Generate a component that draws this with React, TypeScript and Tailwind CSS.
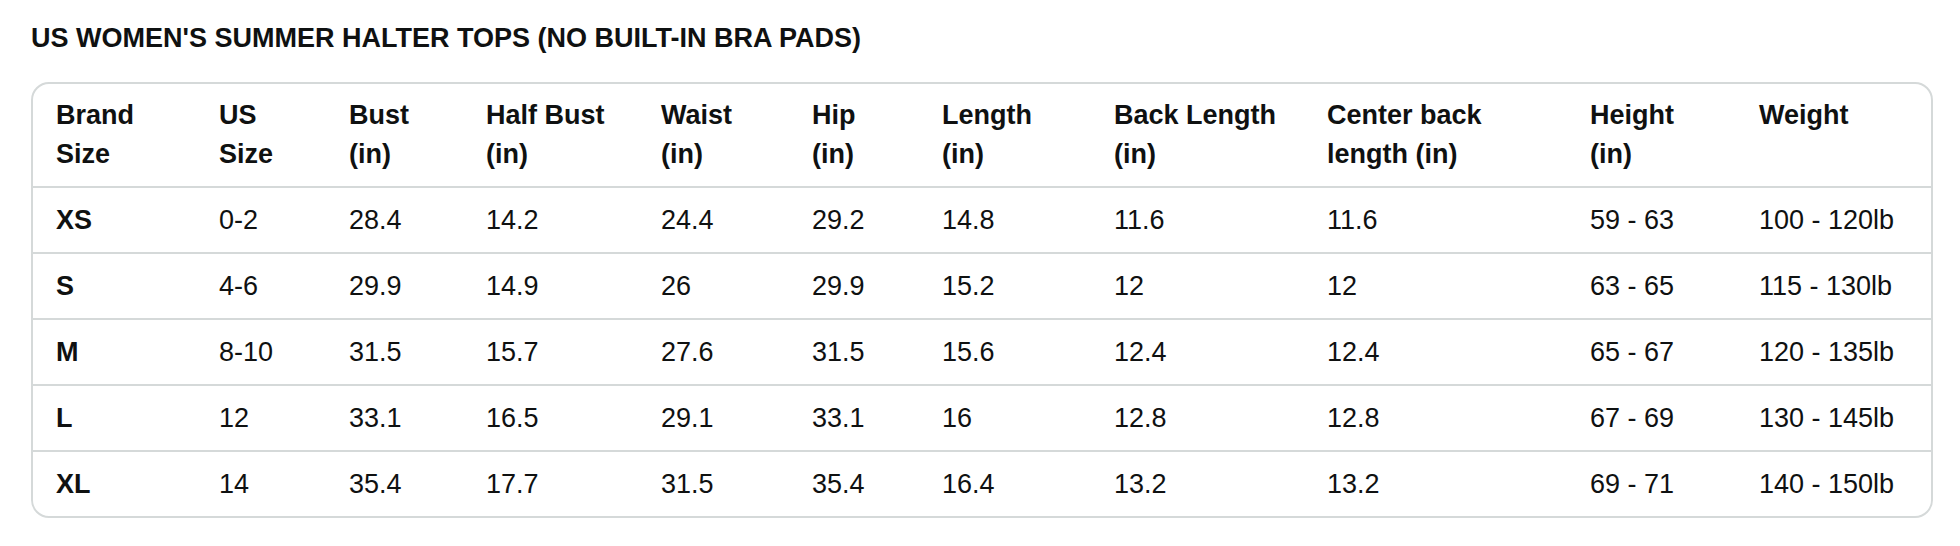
const columns = [
  { label: ["Brand", "Size"], width: "w-[163px]" },
  { label: ["US", "Size"], width: "w-[130px]" },
  { label: ["Bust", "(in)"], width: "w-[137px]" },
  { label: ["Half Bust", "(in)"], width: "w-[175px]" },
  { label: ["Waist", "(in)"], width: "w-[151px]" },
  { label: ["Hip", "(in)"], width: "w-[130px]" },
  { label: ["Length", "(in)"], width: "w-[172px]" },
  { label: ["Back Length", "(in)"], width: "w-[213px]" },
  { label: ["Center back", "length (in)"], width: "w-[263px]" },
  { label: ["Height", "(in)"], width: "w-[169px]" },
  { label: ["Weight"], width: "w-[195px]" },
];

const rows = [
  ["XS", "0-2", "28.4", "14.2", "24.4", "29.2", "14.8", "11.6", "11.6", "59 - 63", "100 - 120lb"],
  ["S", "4-6", "29.9", "14.9", "26", "29.9", "15.2", "12", "12", "63 - 65", "115 - 130lb"],
  ["M", "8-10", "31.5", "15.7", "27.6", "31.5", "15.6", "12.4", "12.4", "65 - 67", "120 - 135lb"],
  ["L", "12", "33.1", "16.5", "29.1", "33.1", "16", "12.8", "12.8", "67 - 69", "130 - 145lb"],
  ["XL", "14", "35.4", "17.7", "31.5", "35.4", "16.4", "13.2", "13.2", "69 - 71", "140 - 150lb"],
];

export default function App() {
  return (
    <div className="min-h-[546px] w-[1960px] bg-white font-['Liberation_Sans',Arial,sans-serif] text-[#0f1111]">
      <div className="pl-[31px] pt-[20px]">
        <h2 className="text-[27px] font-bold leading-[36px]">
          US WOMEN'S SUMMER HALTER TOPS (NO BUILT-IN BRA PADS)
        </h2>

        <div className="mt-[26px] w-[1902px] overflow-hidden rounded-[18px] border-2 border-[#d5d9d9]">
          <table className="w-full table-fixed border-collapse text-[27px] leading-[39px]">
            <colgroup>
              {columns.map((col) => (
                <col key={col.label.join(" ")} className={col.width} />
              ))}
            </colgroup>
            <thead>
              <tr className="border-b-2 border-[#d5d9d9]">
                {columns.map((col) => (
                  <th
                    key={col.label.join(" ")}
                    className="py-3 pl-[23px] pr-2 text-left align-top font-bold"
                  >
                    {col.label.map((line) => (
                      <div key={line} className="whitespace-nowrap">
                        {line}
                      </div>
                    ))}
                  </th>
                ))}
              </tr>
            </thead>
            <tbody>
              {rows.map((row, i) => (
                <tr
                  key={row[0]}
                  className={i < rows.length - 1 ? "border-b-2 border-[#d5d9d9]" : ""}
                >
                  {row.map((cell, j) => (
                    <td
                      key={j}
                      className={
                        j === 0
                          ? "whitespace-nowrap py-[12.5px] pl-[23px] pr-2 font-bold"
                          : "whitespace-nowrap py-[12.5px] pl-[23px] pr-2"
                      }
                    >
                      {cell}
                    </td>
                  ))}
                </tr>
              ))}
            </tbody>
          </table>
        </div>
      </div>
    </div>
  );
}
